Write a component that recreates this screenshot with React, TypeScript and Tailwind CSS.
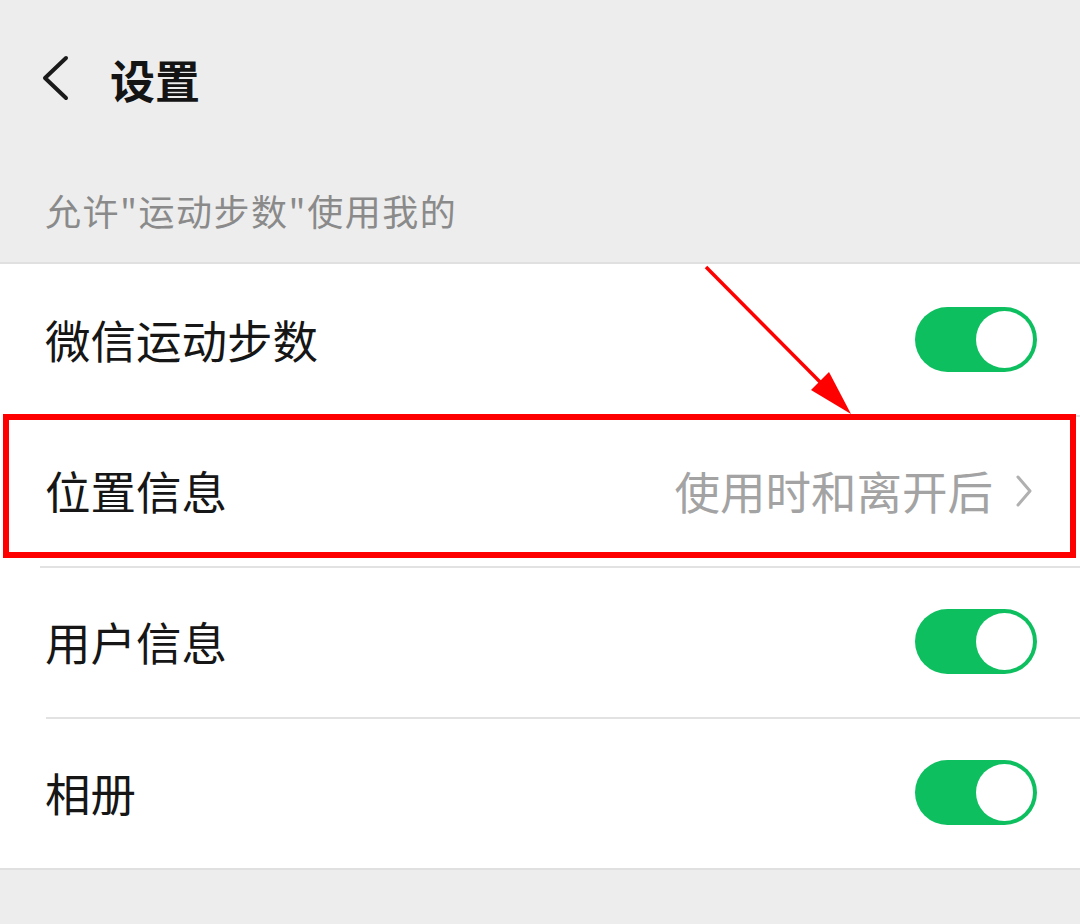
import React from "react";

const font = { fontFamily: '"Noto Sans CJK SC", "Noto Sans", sans-serif' };

function Toggle() {
  return (
    <div className="w-[122px] h-[65px] rounded-full bg-[#0dbf5f] flex items-center justify-end pr-[4px]">
      <div className="w-[57px] h-[57px] rounded-full bg-white" />
    </div>
  );
}

function Row({ label, right, divider }: { label: string; right: React.ReactNode; divider?: string }) {
  return (
    <div className="relative h-[151px] flex items-center justify-between pl-[45px] pr-[43px]">
      {divider && <div className={`absolute top-0 right-0 h-[2px] bg-[#e2e2e2] ${divider}`} />}
      <span className="text-[45.5px] leading-none text-[#161616]">{label}</span>
      {right}
    </div>
  );
}

export default function App() {
  return (
    <div className="w-[1080px] h-[924px] bg-[#ededed] overflow-hidden relative" style={font}>
      <div className="h-[160px] flex items-center pl-[40px]">
        <svg width="30" height="46" viewBox="0 0 30 46" className="mt-[-4px]">
          <path d="M26 3 L5 23 L26 43" fill="none" stroke="#1a1a1a" strokeWidth="4" strokeLinecap="round" strokeLinejoin="round" />
        </svg>
        <span className="ml-[40px] mt-[-2px] text-[45px] font-bold leading-none text-[#141414]">设置</span>
      </div>
      <div className="h-[102px] flex items-center pl-[45px] pb-[2px]">
        <span className="text-[36px] leading-none text-[#8a8a8a] tracking-[1.5px]">允许"运动步数"使用我的</span>
      </div>
      <div className="bg-white border-t-2 border-b-2 border-[#e0e0e0]">
        <Row label="微信运动步数" right={<Toggle />} />
        <Row
          label="位置信息"
          divider="left-[40px]"
          right={
            <div className="flex items-center gap-[22px] mr-[4px]">
              <span className="text-[45.5px] leading-none text-[#a3a3a3]">使用时和离开后</span>
              <svg width="18" height="32" viewBox="0 0 18 32">
                <path d="M3 2 L15 16 L3 30" fill="none" stroke="#b0b0b0" strokeWidth="3" strokeLinecap="round" strokeLinejoin="round" />
              </svg>
            </div>
          }
        />
        <Row label="用户信息" right={<Toggle />} divider="left-[40px]" />
        <Row label="相册" right={<Toggle />} divider="left-[46px]" />
      </div>

      {/* annotation: red box */}
      <div className="absolute left-[3px] top-[414px] w-[1073px] h-[144px] border-[6px] border-[#ff0000]" />
      {/* annotation: red arrow */}
      <svg className="absolute left-0 top-0" width="1080" height="924" viewBox="0 0 1080 924">
        <line x1="706" y1="267" x2="830" y2="392" stroke="#ff0000" strokeWidth="3.5" />
        <polygon points="851,414 811,390 829,372" fill="#ff0000" />
      </svg>
    </div>
  );
}
